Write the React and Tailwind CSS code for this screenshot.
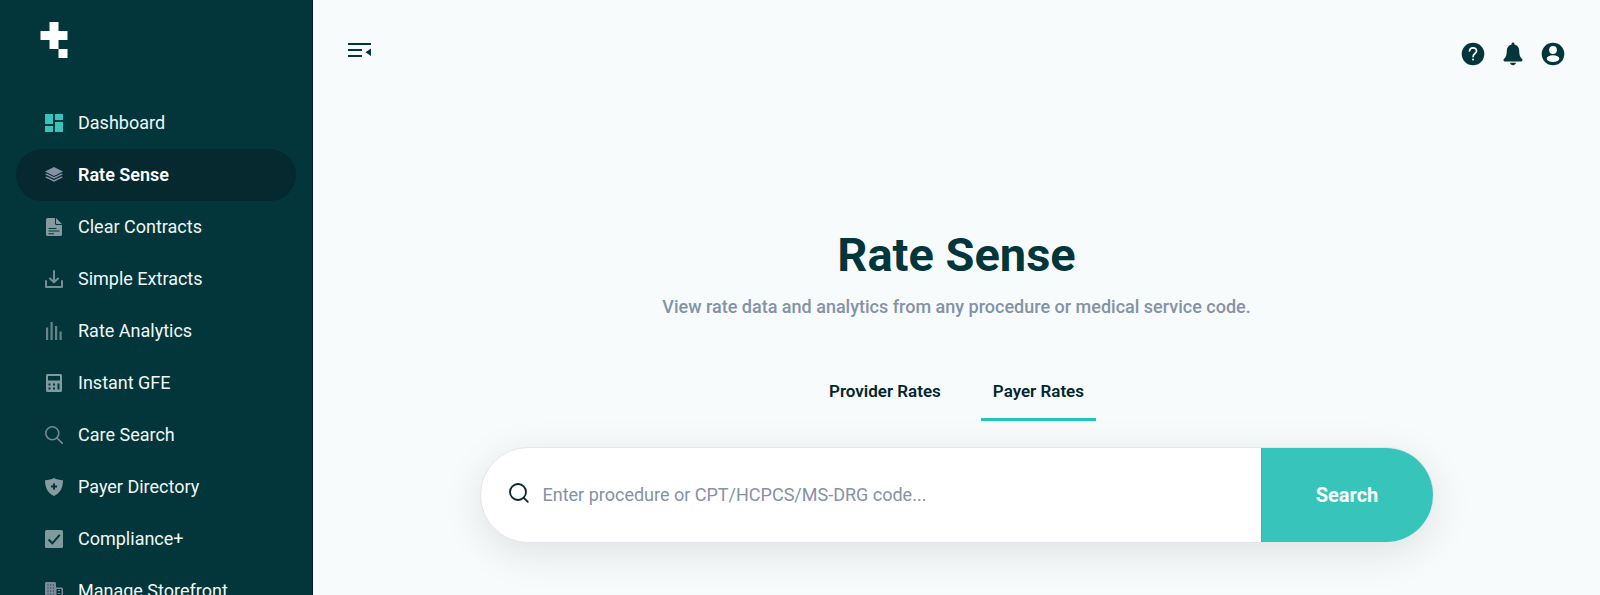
import { useState } from 'react';
import clsx from 'clsx';

const DashboardIcon = () => <path d="M0 0h8v10H0zM10 0h8v6h-8zM0 12h8v6H0zM10 8h8v10h-8z" />;

const LayersIcon = () => (
  <>
    <path d="M9 1l9 4.500L9 10 0 5.500z" />
    <path d="M0 8.200l1.700-.8L9 11l7.300-3.600 1.700.8L9 12.800z" />
    <path d="M0 11.200l1.700-.8L9 14l7.300-3.600 1.700.8L9 15.800z" />
  </>
);

const ContractIcon = () => (
  <path
    fillRule="evenodd"
    d="M2.800 0H10v5.500c0 .8.600 1.500 1.500 1.500H17v9.500c0 .8-.7 1.500-1.500 1.500h-13C1.700 18 1 17.300 1 16.500v-14.700C1 .8 1.800 0 2.800 0zM11 0l6 6h-5.300c-.4 0-.7-.3-.7-.7zM3.500 10v1h8v-1zm0 2.600v1h11v-1zm0 2.600v1h5.500v-1z"
  />
);

const ExtractIcon = () => (
  <path
    fill="none"
    stroke="currentColor"
    strokeWidth="2"
    strokeLinecap="round"
    strokeLinejoin="round"
    d="M9 1v11M5 8.500L9 12.300l4-3.800M1 11v6h16v-6"
  />
);

const AnalyticsIcon = () => <path d="M1 5.500h2.200V18H1zM5.500 0h2.200v18H5.500zM10 4h2.200v14H10zM14.500 9.500h2.200V18h-2.200z" />;

const CalculatorIcon = () => (
  <path
    fillRule="evenodd"
    d="M2.500 0h13c.8 0 1.500.7 1.500 1.500v15c0 .8-.7 1.500-1.500 1.500h-13C1.700 18 1 17.300 1 16.500v-15C1 .7 1.700 0 2.500 0zM3 2v4.500h12V2zM3.500 9.500v2h2v-2zm4.500 0v2h2v-2zm4.500 0v6h2v-6zm-9 4v2h2v-2zm4.500 0v2h2v-2z"
  />
);

const CareSearchIcon = () => (
  <g fill="none" stroke="currentColor" strokeWidth="1.600" strokeLinecap="round">
    <circle cx="7.300" cy="7.300" r="6.500" />
    <path d="M12 12l5.400 5.400" />
  </g>
);

const ShieldIcon = () => (
  <path
    fillRule="evenodd"
    d="M9 0c2.500 1.500 5.500 2 9 2.200 0 7.300-2.500 12.500-9 15.800C2.500 14.700 0 9.500 0 2.200 3.500 2 6.500 1.500 9 0zM8 5.500v2H6v2h2v2h2v-2h2v-2h-2v-2z"
  />
);

const ComplianceIcon = () => (
  <>
    <rect width="18" height="18" rx="1.500" />
    <path d="M3.500 9.500L7.300 13.300 14.800 4.800" fill="none" stroke="#02363b" strokeWidth="2" />
  </>
);

const StorefrontIcon = () => (
  <>
    <path
      fillRule="evenodd"
      d="M1.500 0h8c.8 0 1.500.7 1.500 1.500V5.500h5.500c.8 0 1.500.7 1.500 1.500v11H0V1.500C0 .7.700 0 1.500 0zM11.500 7v9.500h5V7z"
    />
    <path d="M3 2.500v15M5.700 2.500v15M8.400 2.500v15" stroke="#02363b" strokeWidth="1" strokeDasharray="1 2" />
    <path d="M14 8v8" stroke="currentColor" strokeWidth="2" strokeDasharray="1 2" />
  </>
);

const navItems = [
  { label: 'Dashboard', Icon: DashboardIcon, color: 'text-[#37c5bb]' },
  { label: 'Rate Sense', Icon: LayersIcon, color: 'text-[#8592a3]' },
  { label: 'Clear Contracts', Icon: ContractIcon, color: 'text-[#869b9f]' },
  { label: 'Simple Extracts', Icon: ExtractIcon, color: 'text-[#738f92]' },
  { label: 'Rate Analytics', Icon: AnalyticsIcon, color: 'text-[#678689]' },
  { label: 'Instant GFE', Icon: CalculatorIcon, color: 'text-[#819a9d]' },
  { label: 'Care Search', Icon: CareSearchIcon, color: 'text-[#748893]' },
  { label: 'Payer Directory', Icon: ShieldIcon, color: 'text-[#869b9d]' },
  { label: 'Compliance+', Icon: ComplianceIcon, color: 'text-[#819a9d]' },
  { label: 'Manage Storefront', Icon: StorefrontIcon, color: 'text-[#7b8b9c]' }
];

const tabs = ['Provider Rates', 'Payer Rates'];

const Sidebar = () => (
  <aside className="w-[313px] shrink-0 border-r border-[#011d2b] bg-[#02363b] px-4 pt-[22px]">
    <a href="#home" aria-label="Home" className="ml-6 block w-7">
      <svg viewBox="0 0 27 36" className="h-9 w-7" fill="white">
        <path d="M9 0h9v9h9v9h-9v9H9v-9H0V9h9zM18 27h9v9h-9z" />
      </svg>
    </a>

    <nav className="mt-[39px]">
      {navItems.map(({ label, Icon, color }) => (
        <a
          key={label}
          href="#nav"
          className={clsx(
            'flex h-[52px] items-center gap-[15px] rounded-full pl-[29px] text-lg text-[#f1f6f6]',
            label === 'Rate Sense' && 'bg-[#05292e] font-semibold text-white'
          )}
        >
          <svg viewBox="0 0 18 18" className={clsx('size-[18px] shrink-0', color)} fill="currentColor">
            <Icon />
          </svg>
          {label}
        </a>
      ))}
    </nav>
  </aside>
);

const Header = () => (
  <header className="flex items-center justify-between px-[35px] pt-[42px] text-[#02363b]">
    <button aria-label="Collapse menu" className="-mt-2">
      <svg viewBox="0 0 24 16" className="h-4 w-6" fill="currentColor">
        <path d="M0 1h23v2H0zM0 7h14v2H0zM0 13h14v2H0zM23 6.500v7.500l-5.500-3.700z" />
      </svg>
    </button>

    <div className="flex gap-4">
      <button aria-label="Help">
        <svg viewBox="0 0 24 24" className="size-6">
          <circle cx="12" cy="12" r="11.300" fill="currentColor" />
          <path
            d="M8.500 9c.2-2 1.600-3.200 3.500-3.200 2 0 3.500 1.300 3.500 3.100 0 2.500-3.400 2.700-3.400 5.500"
            fill="none"
            stroke="white"
            strokeWidth="1.700"
            strokeLinecap="round"
          />
          <circle cx="12.100" cy="17.500" r="1.100" fill="white" />
        </svg>
      </button>
      <button aria-label="Notifications">
        <svg viewBox="0 0 24 24" className="size-6" fill="currentColor">
          <path d="M12 .5c.8 0 1.400.6 1.400 1.400v.5c3 .7 4.800 3 4.800 6 0 4.500.8 6.800 2.900 8.500.9.800.3 2.500-.9 2.500H3.800c-1.200 0-1.800-1.700-.9-2.500C5 15.200 5.800 12.900 5.800 8.400c0-3 1.800-5.300 4.800-6v-.5C10.600 1.100 11.200.5 12 .5zM9 20.800h6c-.3 1.500-1.500 2.500-3 2.500s-2.700-1-3-2.500z" />
        </svg>
      </button>
      <button aria-label="Account">
        <svg viewBox="0 0 24 24" className="size-6">
          <circle cx="12" cy="12" r="11.300" fill="currentColor" />
          <circle cx="12" cy="8" r="3.900" fill="white" />
          <ellipse cx="12" cy="16.700" rx="6.300" ry="3.400" fill="white" />
        </svg>
      </button>
    </div>
  </header>
);

const App = () => {
  const [activeTab, setActiveTab] = useState('Payer Rates');
  const [query, setQuery] = useState('');

  return (
    <div className="flex h-screen overflow-hidden bg-[#f7fbfc] font-['Roboto',sans-serif]">
      <Sidebar />

      <div className="min-w-0 flex-1">
        <Header />

        <main className="mx-auto flex w-3/4 flex-col items-center pt-[159px]">
          <h1 className="text-[47px] leading-[60px] font-bold text-[#02363b]">Rate Sense</h1>
          <p className="mt-[10px] text-lg leading-6 font-medium text-[#8592a6]">
            View rate data and analytics from any procedure or medical service code.
          </p>

          <div role="tablist" className="mt-[52px] flex gap-7">
            {tabs.map((tab) => (
              <button
                key={tab}
                role="tab"
                aria-selected={activeTab === tab}
                onClick={() => setActiveTab(tab)}
                className={clsx(
                  'border-b-[3px] px-3 pt-2 pb-[15px] text-[17px] leading-6 font-semibold text-[#02262e]',
                  activeTab === tab ? 'border-[#1fc7bb]' : 'border-transparent'
                )}
              >
                {tab}
              </button>
            ))}
          </div>

          <form
            onSubmit={(e) => e.preventDefault()}
            className="mt-[26px] flex h-24 w-full max-w-[954px] rounded-full border border-[#e2e6ea] bg-white shadow-[0_10px_40px_rgba(0,0,0,0.10)]"
          >
            <label htmlFor="code-search" className="flex items-center pr-[14px] pb-1 pl-7 text-[#02262e]">
              <svg
                viewBox="0 0 20 20"
                className="size-5"
                fill="none"
                stroke="currentColor"
                strokeWidth="1.800"
                role="img"
                aria-label="Procedure or code"
              >
                <circle cx="9" cy="9" r="8" />
                <path d="M14.800 14.800l4 4" strokeLinecap="round" />
              </svg>
            </label>
            <input
              id="code-search"
              type="text"
              value={query}
              onChange={(e) => setQuery(e.target.value)}
              placeholder="Enter procedure or CPT/HCPCS/MS-DRG code..."
              className="min-w-0 flex-1 text-lg text-[#02262e] outline-none placeholder:text-[#8592a6]"
            />
            <button
              type="submit"
              className="w-[172px] rounded-r-full border-l border-[#1fc0b5] bg-[#37c5bb] text-xl font-bold text-white"
            >
              Search
            </button>
          </form>
        </main>
      </div>
    </div>
  );
};

export default App;
